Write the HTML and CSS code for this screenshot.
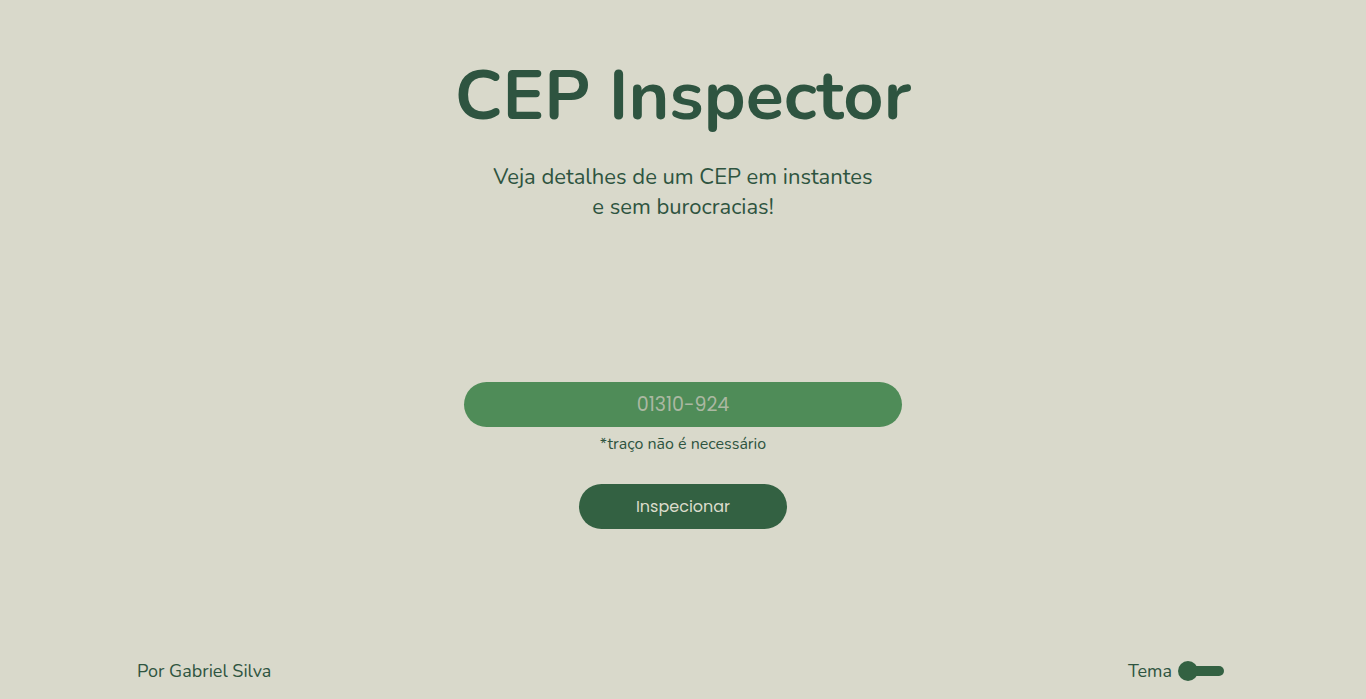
FILE: index.html
```html
<!DOCTYPE html>
<html lang="pt-BR">
<head>
<meta charset="utf-8">
<title>CEP Inspector</title>
<link rel="stylesheet" href="styles.css">
</head>
<body>
<div class="page">
  <main class="main">
    <header class="hero">
      <h1 class="title">CEP Inspector</h1>
      <p class="subtitle">Veja detalhes de um CEP em instantes<br>e sem burocracias!</p>
    </header>
    <form class="form">
      <input class="cep-input" type="text" placeholder="01310-924">
      <span class="hint">*traço não é necessário</span>
      <button class="btn" type="button">Inspecionar</button>
    </form>
  </main>
  <footer class="footer">
    <span class="author">Por Gabriel Silva</span>
    <div class="theme">
      <span class="theme-label">Tema</span>
      <span class="toggle"><span class="knob"></span></span>
    </div>
  </footer>
</div>
</body>
</html>
```

FILE: styles.css
```css
* { box-sizing: border-box; }
html, body { margin: 0; padding: 0; }
body {
  background: #d9d9cb;
  color: #2e5440;
  font-family: "Nunito", "Lato", "Open Sans", sans-serif;
}
.page {
  height: 699px;
  display: flex;
  flex-direction: column;
}
.main {
  flex: 1;
  display: flex;
  flex-direction: column;
  align-items: center;
}
.hero {
  display: flex;
  flex-direction: column;
  align-items: center;
  padding-top: 56px;
}
.title {
  margin: 0;
  font-size: 70px;
  line-height: 80px;
  font-weight: 700;
  color: #2e5440;
}
.subtitle {
  margin: 26px 0 0;
  font-size: 22px;
  line-height: 30px;
  text-align: center;
  color: #2e5440;
}
.form {
  margin-top: 160px;
  display: flex;
  flex-direction: column;
  align-items: center;
}
.cep-input {
  width: 438px;
  height: 45px;
  border: none;
  border-radius: 23px;
  background: #4f8c58;
  text-align: center;
  font-family: "Poppins", "Inter", "Open Sans", sans-serif;
  font-size: 19px;
  color: #e6e6da;
  outline: none;
}
.cep-input::placeholder { color: #abb8a2; }
.hint {
  margin-top: 7px;
  font-size: 16px;
  line-height: 21px;
  color: #2e5440;
}
.btn {
  margin-top: 29px;
  width: 208px;
  height: 45px;
  border: none;
  border-radius: 23px;
  background: #336142;
  color: #dcdccc;
  font-family: "Poppins", "Inter", "Open Sans", sans-serif;
  font-size: 16px;
}
.footer {
  display: flex;
  justify-content: space-between;
  align-items: center;
  padding: 0 142px 16px 137px;
  font-size: 18px;
  color: #2e5440;
}
.theme {
  display: flex;
  align-items: center;
  gap: 6px;
}
.toggle {
  position: relative;
  display: block;
  width: 46px;
  height: 20px;
}
.toggle::before {
  content: "";
  position: absolute;
  left: 8px;
  right: 0;
  top: 5px;
  height: 10px;
  border-radius: 5px;
  background: #336142;
}
.knob {
  position: absolute;
  left: 0;
  top: 0;
  width: 20px;
  height: 20px;
  border-radius: 50%;
  background: #336142;
}
```
